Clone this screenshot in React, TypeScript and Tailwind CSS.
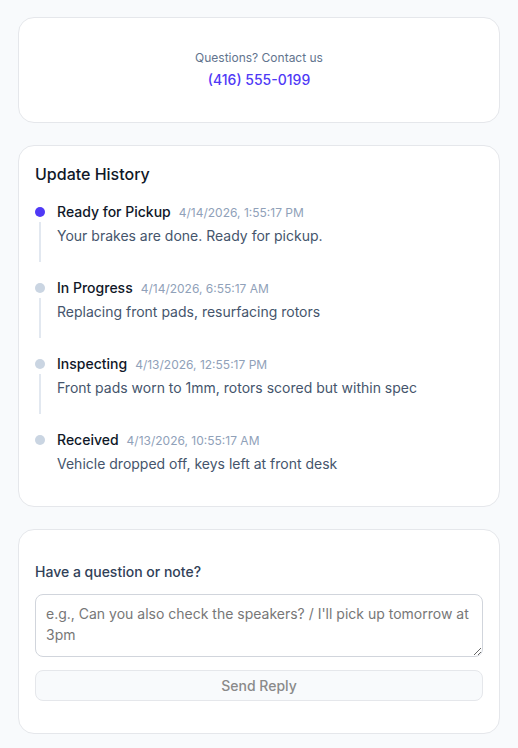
import React, { useState } from 'react';

type Update = {
  status: string;
  time: string;
  note: string;
  current?: boolean;
};

const updates: Update[] = [
  { status: 'Ready for Pickup', time: '4/14/2026, 1:55:17 PM', note: 'Your brakes are done. Ready for pickup.', current: true },
  { status: 'In Progress', time: '4/14/2026, 6:55:17 AM', note: 'Replacing front pads, resurfacing rotors' },
  { status: 'Inspecting', time: '4/13/2026, 12:55:17 PM', note: 'Front pads worn to 1mm, rotors scored but within spec' },
  { status: 'Received', time: '4/13/2026, 10:55:17 AM', note: 'Vehicle dropped off, keys left at front desk' },
];

const App: React.FC = () => {
  const [reply, setReply] = useState('');

  return (
    <div className="min-h-screen bg-[#f8fafc] px-[18px] pt-[17px] pb-4 font-['Inter',sans-serif]">
      <div className="flex flex-col gap-[22px] w-[482px]">
        {/* contact */}
        <div className="bg-white border border-gray-200 rounded-2xl px-4 py-8 text-center">
          <p className="text-xs leading-4 text-slate-500">Questions? Contact us</p>
          <a href="#" className="block mt-1 text-sm leading-5 font-medium text-indigo-600">
            (416) 555-0199
          </a>
        </div>

        {/* history */}
        <div className="bg-white border border-gray-200 rounded-2xl p-4">
          <h2 className="text-base leading-6 font-medium text-gray-900 mb-4">Update History</h2>
          <div className="flex flex-col gap-4">
            {updates.map((u, i) => (
              <div key={i} className="flex gap-3">
                <div className="flex flex-col items-center w-2.5 shrink-0 pt-[5px]">
                  <span
                    className={
                      u.current
                        ? 'w-2.5 h-2.5 rounded-full bg-indigo-600'
                        : 'w-2.5 h-2.5 rounded-full bg-slate-300'
                    }
                  />
                  {i < updates.length - 1 && <span className="mt-[5px] w-0.5 flex-1 bg-slate-200" />}
                </div>
                <div className="pb-4">
                  <div className="flex items-baseline gap-2">
                    <span className="text-sm leading-5 font-medium text-gray-900">{u.status}</span>
                    <span className="text-xs leading-4 text-slate-400">{u.time}</span>
                  </div>
                  <p className="mt-1 text-sm leading-5 text-slate-600">{u.note}</p>
                </div>
              </div>
            ))}
          </div>
        </div>

        {/* reply */}
        <div className="bg-white border border-gray-200 rounded-2xl px-4 py-8">
          <label className="block text-sm leading-5 font-medium text-slate-700 mb-3">
            Have a question or note?
          </label>
          <textarea
            value={reply}
            onChange={(e) => setReply(e.target.value)}
            placeholder="e.g., Can you also check the speakers? / I'll pick up tomorrow at 3pm"
            className="block w-full h-[63px] rounded-lg border border-gray-300 px-2.5 py-2 text-sm leading-[21px] text-gray-900 placeholder:text-[#777777] focus:outline-none"
          />
          <button
            disabled={!reply.trim()}
            className="mt-[13px] w-full h-[31px] rounded-lg border border-gray-200 bg-[#f8fafc] text-sm font-medium text-[#8a8a8a]"
          >
            Send Reply
          </button>
        </div>
      </div>
    </div>
  );
};

export default App;
